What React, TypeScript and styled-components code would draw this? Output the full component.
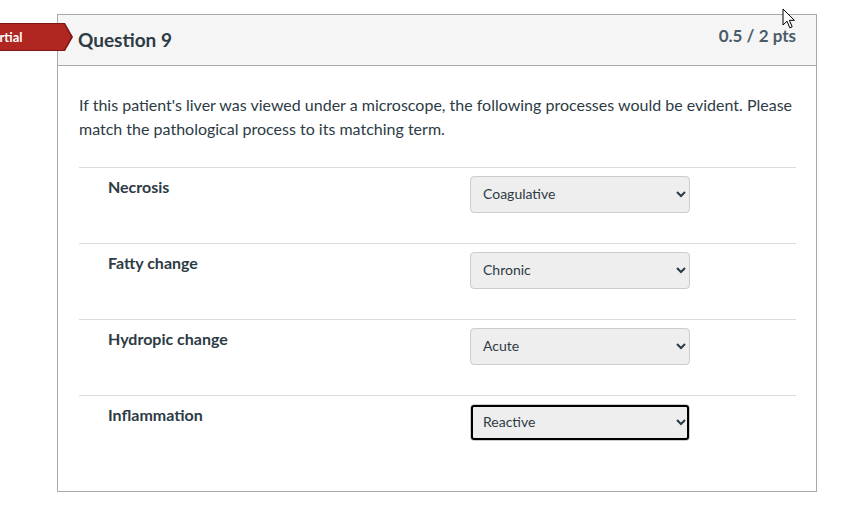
import styled, { createGlobalStyle } from "styled-components";

const GlobalStyle = createGlobalStyle`
    html, body {
        margin: 0;
        padding: 0;
        background: #ffffff;
    }
    body {
        font-family: Lato, "Open Sans", "Liberation Sans", sans-serif;
        color: #2d3b45;
        -webkit-font-smoothing: antialiased;
    }
`;

const rows = [
    { label: "Necrosis", value: "Coagulative" },
    { label: "Fatty change", value: "Chronic" },
    { label: "Hydropic change", value: "Acute" },
    { label: "Inflammation", value: "Reactive", focused: true },
];

const options = ["Coagulative", "Chronic", "Acute", "Reactive", "Caseous", "Liquefactive"];

export default function App() {
    return (
        <Page>
            <GlobalStyle />
            <Badge>
                <BadgeInner>Partial</BadgeInner>
            </Badge>
            <Cursor width="14" height="22" viewBox="0 0 14 22">
                <path d="M1 1 L1 17 L5 13.2 L7.8 19.8 L10.2 18.8 L7.4 12.3 L12.4 12.3 Z" fill="#ffffff" stroke="#000000" strokeWidth="1" strokeLinejoin="miter" />
            </Cursor>
            <Card>
                <Header>
                    <Title>Question 9</Title>
                    <Points>0.5 / 2 pts</Points>
                </Header>
                <Body>
                    <Prompt>
                        If this patient's liver was viewed under a microscope, the following processes would be evident. Please
                        match the pathological process to its matching term.
                    </Prompt>
                    <Matches>
                        {rows.map((row) => (
                            <MatchRow key={row.label}>
                                <Label>{row.label}</Label>
                                <Select defaultValue={row.value} $focused={row.focused}>
                                    {options.map((o) => (
                                        <option key={o} value={o}>{o}</option>
                                    ))}
                                </Select>
                            </MatchRow>
                        ))}
                    </Matches>
                </Body>
            </Card>
        </Page>
    );
}

const Page = styled.div`
    position: relative;
    width: 853px;
    height: 531px;
    padding: 14px 0 0 57px;
    box-sizing: border-box;
    overflow: hidden;
`;

const Badge = styled.div`
    position: absolute;
    left: -22px;
    top: 23px;
    width: 95px;
    height: 28px;
    background: #7c1613;
    clip-path: polygon(0 0, calc(100% - 8px) 0, 100% 50%, calc(100% - 8px) 100%, 0 100%);
    z-index: 2;
`;

const BadgeInner = styled.div`
    height: 26px;
    width: 93px;
    margin-top: 1px;
    box-sizing: border-box;
    padding-left: 7px;
    background: #b02621;
    color: #ffffff;
    font-size: 13px;
    font-weight: 700;
    line-height: 27px;
    clip-path: polygon(0 0, calc(100% - 7px) 0, 100% 50%, calc(100% - 7px) 100%, 0 100%);
`;

const Cursor = styled.svg`
    position: absolute;
    left: 782px;
    top: 8px;
    z-index: 3;
`;

const Card = styled.div`
    width: 760px;
    box-sizing: border-box;
    border: 1px solid #a9a9a9;
    background: #ffffff;
`;

const Header = styled.div`
    height: 51px;
    box-sizing: border-box;
    padding: 12px 20px 0 20px;
    display: flex;
    justify-content: space-between;
    align-items: flex-start;
    background: #f5f5f5;
    border-bottom: 1px solid #a9a9a9;
`;

const Title = styled.h2`
    margin: 1px 0 0;
    font-size: 19px;
    font-weight: 700;
    line-height: 24px;
    color: #2d3b45;
`;

const Points = styled.div`
    margin-top: -1px;
    font-size: 17px;
    font-weight: 700;
    line-height: 20px;
    color: #4a5b68;
`;

const Body = styled.div`
    padding: 27px 20px 20px 21px;
`;

const Prompt = styled.p`
    margin: 0 0 26px;
    font-size: 16px;
    line-height: 24px;
`;

const Matches = styled.div`
    display: flex;
    flex-direction: column;
`;

const MatchRow = styled.div`
    display: flex;
    align-items: flex-start;
    padding: 8px 0 30px;
    border-top: 1px solid #dddddd;
`;

const Label = styled.div`
    width: 391px;
    padding-left: 29px;
    box-sizing: border-box;
    font-size: 16px;
    font-weight: 700;
    line-height: 22px;
`;

const Select = styled.select<{ $focused?: boolean }>`
    width: 220px;
    height: 37px;
    box-sizing: border-box;
    padding: 0 6px 3px 8px;
    font-family: Lato, "Open Sans", "Liberation Sans", sans-serif;
    font-size: 14px;
    color: #2d3b45;
    background-color: #eeeeee;
    border: 1px solid #c7cdd1;
    border-radius: 4px;
    outline: ${(p) => (p.$focused ? "2px solid #000000" : "none")};
    outline-offset: -3px;
`;
